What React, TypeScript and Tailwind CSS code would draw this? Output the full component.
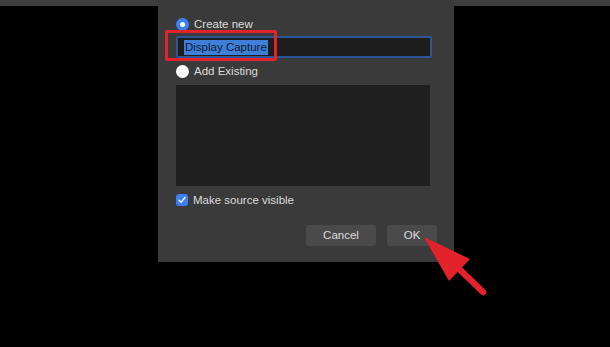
export default function App() {
  return (
    <div className="relative w-[610px] h-[347px] overflow-hidden bg-black font-['Liberation_Sans',Arial,sans-serif] text-[11.5px] text-[#dcdcdc]">
      {/* window strip behind the dialog */}
      <div className="h-[6px] w-full bg-[#3d3d3d]" />

      {/* dialog */}
      <div className="absolute left-[158px] top-0 flex h-[262px] w-[296px] flex-col bg-[#3a3a3a] pl-[18px] pr-[22px] pt-[17px]">
        <label className="flex h-[14px] items-center gap-[5px]">
          <span className="flex h-[13px] w-[13px] items-center justify-center rounded-full bg-[#3b7ff0]">
            <span className="h-[5px] w-[5px] rounded-full bg-white" />
          </span>
          <span className="pt-[1px]">Create new</span>
        </label>

        <div className="mt-[5px] flex h-[22px] items-center rounded-[2px] border-2 border-[#2a5697] bg-[#1d1d1d] pl-[6px]">
          <span className="bg-[#3f7fd8] px-[1px] leading-[15px] text-[#0c1a33]">Display Capture</span>
        </div>

        <label className="mt-[6px] flex h-[14px] items-center gap-[5px]">
          <span className="h-[13px] w-[13px] rounded-full bg-white" />
          <span className="pt-[1px]">Add Existing</span>
        </label>

        <div className="mt-[7px] h-[101px] w-[254px] bg-[#1f1f1f]" />

        <label className="mt-[7px] flex h-[14px] items-center gap-[5px]">
          <span className="flex h-[12px] w-[12px] items-center justify-center rounded-[3px] bg-[#3b7ff0]">
            <svg viewBox="0 0 12 12" className="h-[10px] w-[10px]">
              <path d="M2.5 6.2 L5 8.6 L9.5 3" fill="none" stroke="white" strokeWidth="1.7" strokeLinecap="round" strokeLinejoin="round" />
            </svg>
          </span>
          <span className="pt-[1px]">Make source visible</span>
        </label>

        <div className="mt-[18px] -mr-[5px] flex justify-end gap-[11px]">
          <button className="h-[21px] w-[70px] rounded-[3px] bg-[#4a4a4a] pt-[1px] text-[#dcdcdc]">Cancel</button>
          <button className="h-[21px] w-[50px] rounded-[3px] bg-[#4a4a4a] pt-[1px] text-[#dcdcdc]">OK</button>
        </div>
      </div>

      {/* annotation: red box around the name */}
      <div className="absolute left-[165px] top-[30px] h-[31px] w-[112px] rounded-[2px] border-[3px] border-[#e3232b]" />

      {/* annotation: arrow pointing at OK */}
      <svg className="pointer-events-none absolute left-0 top-0" width="610" height="347" viewBox="0 0 610 347">
        <polygon points="424,237 470,259 449,281" fill="#e3232b" />
        <line x1="456" y1="266" x2="483" y2="292" stroke="#e3232b" strokeWidth="6.5" strokeLinecap="round" />
      </svg>
    </div>
  )
}
